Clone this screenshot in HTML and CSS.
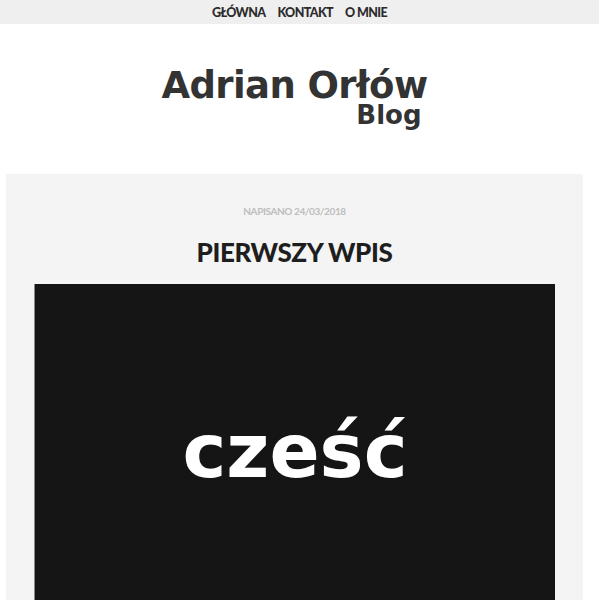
FILE: index.html
```html
<!DOCTYPE html>
<html lang="pl">
<head>
<meta charset="utf-8">
<title>Adrian Orłów Blog</title>
<link rel="stylesheet" href="styles.css">
</head>
<body>
<nav class="topnav">
  <a href="#" class="nav-link">GŁÓWNA</a>
  <a href="#" class="nav-link">KONTAKT</a>
  <a href="#" class="nav-link">O MNIE</a>
</nav>
<header class="site-header">
  <div class="brand">
    <h1 class="brand-name">Adrian Orłów</h1>
    <div class="brand-sub">Blog</div>
  </div>
</header>
<main class="post">
  <div class="post-meta">NAPISANO 24/03/2018</div>
  <h2 class="post-title">PIERWSZY WPIS</h2>
  <div class="post-image">
    <span class="post-image-text">cześć</span>
  </div>
</main>
</body>
</html>
```

FILE: styles.css
```css
html, body {
  margin: 0;
  padding: 0;
  background: #fff;
}
body {
  font-family: "Lato", "Open Sans", sans-serif;
  color: #333;
  overflow: hidden;
}
.topnav {
  height: 24px;
  background: #efefef;
  display: flex;
  justify-content: center;
  align-items: center;
  gap: 12px;
}
.nav-link {
  font-family: "Lato", sans-serif;
  font-weight: 900;
  font-size: 12.5px;
  color: #2b2b2b;
  text-decoration: none;
  letter-spacing: -0.6px;
}
.site-header {
  height: 150px;
  display: flex;
  justify-content: center;
}
.brand {
  display: flex;
  flex-direction: column;
  align-items: flex-end;
  padding-top: 43px;
  margin-left: -10px;
}
.brand-name {
  margin: 0;
  font-family: "DejaVu Sans", sans-serif;
  font-weight: bold;
  font-size: 37px;
  line-height: 38px;
  color: #333;
  letter-spacing: -0.6px;
}
.brand-sub {
  font-family: "DejaVu Sans", sans-serif;
  font-weight: bold;
  font-size: 26px;
  line-height: 20px;
  color: #333;
  margin-right: 6px;
}
.post {
  margin-left: 6px;
  width: 577px;
  background: #f4f4f4;
  padding-top: 30px;
  display: flex;
  flex-direction: column;
  align-items: center;
}
.post-meta {
  font-family: "Lato", sans-serif;
  font-weight: bold;
  font-size: 10px;
  color: #bdbdbd;
  line-height: 14px;
  letter-spacing: -0.4px;
}
.post-title {
  margin: 18px 0 16px;
  font-family: "Lato", sans-serif;
  font-weight: 900;
  font-size: 26px;
  line-height: 32px;
  color: #1e1e1e;
  letter-spacing: -0.4px;
}
.post-image {
  width: 520px;
  height: 340px;
  background: #151515;
  border-left: 1px solid #888;
  display: flex;
  justify-content: center;
  align-items: center;
}
.post-image-text {
  font-family: "DejaVu Sans", sans-serif;
  font-weight: bold;
  font-size: 74px;
  color: #fff;
  margin-top: -6px;
}
```
